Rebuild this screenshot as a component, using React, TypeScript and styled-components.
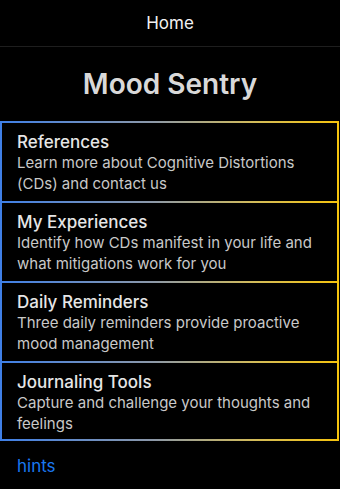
import React from "react";
import styled, { createGlobalStyle } from "styled-components";

const Global = createGlobalStyle`
  html, body { margin: 0; padding: 0; background: #000; }
  body { font-family: Inter, "Liberation Sans", sans-serif; -webkit-font-smoothing: antialiased; }
`;

const Page = styled.div`
  width: 340px;
  height: 489px;
  background: #000;
  display: flex;
  flex-direction: column;
  overflow: hidden;
`;

const NavBar = styled.div`
  height: 46px;
  display: flex;
  align-items: center;
  justify-content: center;
  border-bottom: 1px solid #1e1e1e;
  color: #f2f2f2;
  font-size: 17px;
  font-weight: 400;
`;

const Title = styled.h1`
  margin: 0;
  height: 74px;
  display: flex;
  align-items: center;
  justify-content: center;
  color: #d9d9d9;
  font-size: 28px;
  font-weight: 600;
  box-sizing: border-box;
`;

const List = styled.div`
  display: flex;
  flex-direction: column;
  margin: 0 1px 0 0;
`;

const Card = styled.div<{ $last?: boolean }>`
  border-style: solid;
  border-width: 2px 2px ${(p) => (p.$last ? "2px" : "0")} 2px;
  border-image: linear-gradient(to right, #3f7fe6, #8c98a8 45%, #d2bb5a 75%, #f6c40e) 1;
  padding: 9px 15px 7px 15px;
  height: 80px;
  box-sizing: border-box;
  display: flex;
  flex-direction: column;
`;

const CardTitle = styled.div`
  color: #e6e6e6;
  font-size: 17px;
  font-weight: 500;
  line-height: 20px;
`;

const CardText = styled.div`
  color: #c9c9c9;
  font-size: 15px;
  line-height: 21px;
`;

const Hint = styled.a`
  color: #1a78f0;
  font-size: 17px;
  margin: 15px 0 0 17px;
  text-decoration: none;
`;

const items = [
  { t: "References", d: "Learn more about Cognitive Distortions (CDs) and contact us" },
  { t: "My Experiences", d: "Identify how CDs manifest in your life and what mitigations work for you" },
  { t: "Daily Reminders", d: "Three daily reminders provide proactive mood management" },
  { t: "Journaling Tools", d: "Capture and challenge your thoughts and feelings" },
];

export default function App() {
  return (
    <Page>
      <Global />
      <NavBar>Home</NavBar>
      <Title>Mood Sentry</Title>
      <List>
        {items.map((it, i) => (
          <Card key={it.t} $last={i === items.length - 1}>
            <CardTitle>{it.t}</CardTitle>
            <CardText>{it.d}</CardText>
          </Card>
        ))}
      </List>
      <Hint>hints</Hint>
    </Page>
  );
}
